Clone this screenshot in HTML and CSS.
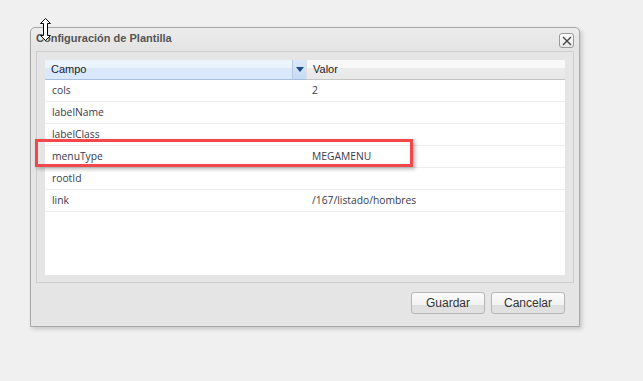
FILE: index.html
```html
<!DOCTYPE html>
<html lang="es">
<head>
  <meta charset="UTF-8">
  <title>Configuración de Plantilla</title>
  <link rel="stylesheet" href="styles.css">
</head>
<body>
  <div class="window">
    <div class="window-header">
      <span class="window-title">Configuración de Plantilla</span>
      <span class="close-btn">
        <svg width="10" height="10" viewBox="0 0 10 10"><path d="M1 1L9 9M9 1L1 9" stroke="#444" stroke-width="1.4"/></svg>
      </span>
    </div>
    <div class="window-body">
      <div class="grid">
        <div class="grid-head">
          <div class="col-campo">Campo</div>
          <div class="sort-btn">
            <svg width="8" height="5" viewBox="0 0 8 5"><path d="M0 0H8L4 5Z" fill="#1f4a8a"/></svg>
          </div>
          <div class="col-valor">Valor</div>
        </div>
        <div class="grid-row"><div class="cell-campo">cols</div><div class="cell-valor">2</div></div>
        <div class="grid-row"><div class="cell-campo">labelName</div><div class="cell-valor"></div></div>
        <div class="grid-row"><div class="cell-campo">labelClass</div><div class="cell-valor"></div></div>
        <div class="grid-row"><div class="cell-campo">menuType</div><div class="cell-valor">MEGAMENU</div></div>
        <div class="grid-row"><div class="cell-campo">rootId</div><div class="cell-valor"></div></div>
        <div class="grid-row"><div class="cell-campo">link</div><div class="cell-valor">/167/listado/hombres</div></div>
      </div>
    </div>
    <div class="window-footer">
      <button type="button" class="btn">Guardar</button>
      <button type="button" class="btn">Cancelar</button>
    </div>
  </div>

  <div class="highlight"></div>

  <svg class="cursor" width="11" height="23" viewBox="0 0 11 23">
    <path d="M5.5 0.5L10.5 5.5H7.5V17.5H10.5L5.5 22.5L0.5 17.5H3.5V5.5H0.5Z" fill="#fff" stroke="#000" stroke-width="1"/>
  </svg>
</body>
</html>
```

FILE: styles.css
```css
body {
  margin: 0;
  background: #f0f0f0;
  font-family: "Liberation Sans", Arial, sans-serif;
  font-size: 11px;
  color: #222;
  width: 643px;
  height: 381px;
  position: relative;
  overflow: hidden;
}

.window {
  position: absolute;
  left: 30px;
  top: 27px;
  width: 548px;
  height: 298px;
  background: #e5e5e5;
  border: 1px solid #a8a8a8;
  border-radius: 5px 5px 0 0;
  box-shadow: 2px 2px 4px rgba(0, 0, 0, 0.18);
  display: flex;
  flex-direction: column;
}

.window-header {
  height: 23px;
  box-sizing: border-box;
  display: flex;
  align-items: flex-start;
  justify-content: space-between;
  padding: 4px 5px 0 5px;
  background: linear-gradient(#ececec, #e3e3e3);
  border-radius: 5px 5px 0 0;
}

.window-title {
  font-weight: bold;
  color: #555;
  font-size: 11px;
  line-height: 13px;
}

.close-btn {
  width: 13px;
  height: 13px;
  border: 1px solid #999;
  border-radius: 3px;
  background: linear-gradient(#fff, #e8e8e8);
  display: flex;
  align-items: center;
  justify-content: center;
  margin-top: 1px;
}

.window-body {
  margin: 0 5px;
  height: 232px;
  border: 1px solid #cdcdcd;
  padding: 8px 8px 7px 8px;
  box-sizing: border-box;
}

.grid {
  background: #fff;
  height: 100%;
}

.grid-head {
  display: flex;
  height: 19px;
  border-bottom: 1px solid #c5c5c5;
}

.col-campo {
  width: 241px;
  padding-left: 6px;
  line-height: 19px;
  background: linear-gradient(#ebf3fd 0%, #ebf3fd 40%, #d9e8fb 41%, #d9e8fb 100%);
  border-right: 1px solid #b7cbe5;
  border-bottom: 1px solid #a5bfdc;
  margin-bottom: -1px;
}

.sort-btn {
  width: 13px;
  display: flex;
  align-items: center;
  justify-content: center;
  background: linear-gradient(#dbe8f8, #c6daf4);
  border-bottom: 1px solid #a5bfdc;
  margin-bottom: -1px;
}

.col-valor {
  flex: 1;
  padding-left: 6px;
  line-height: 19px;
  border-left: 1px solid #e0e0e0;
  background: linear-gradient(#f8f8f8 0%, #f8f8f8 40%, #ececec 41%, #e8e8e8 100%);
}

.grid-row {
  display: flex;
  height: 21px;
  border-bottom: 1px solid #ededed;
  font-family: "Open Sans", "Noto Sans", sans-serif;
  font-size: 10.3px;
  color: #3a3a4a;
  line-height: 21px;
}

.cell-campo {
  width: 253px;
  padding-left: 7px;
}

.cell-valor {
  flex: 1;
  padding-left: 7px;
}

.window-footer {
  flex: 1;
  display: flex;
  justify-content: flex-end;
  align-items: center;
  gap: 6px;
  padding-right: 14px;
}

.btn {
  width: 74px;
  height: 22px;
  border: 1px solid #b5b5b5;
  border-radius: 3px;
  background: linear-gradient(#fafafa 0%, #f2f2f2 60%, #dedede 61%, #e2e2e2 100%);
  font-family: "Liberation Sans", Arial, sans-serif;
  font-size: 12px;
  color: #333;
  padding: 0;
  margin-top: -4px;
}

.highlight {
  position: absolute;
  left: 35px;
  top: 139px;
  width: 372px;
  height: 22px;
  border: 3px solid #f2484c;
  box-shadow: 2px 2px 4px rgba(0, 0, 0, 0.3);
}

.cursor {
  position: absolute;
  left: 40px;
  top: 18px;
}
```
